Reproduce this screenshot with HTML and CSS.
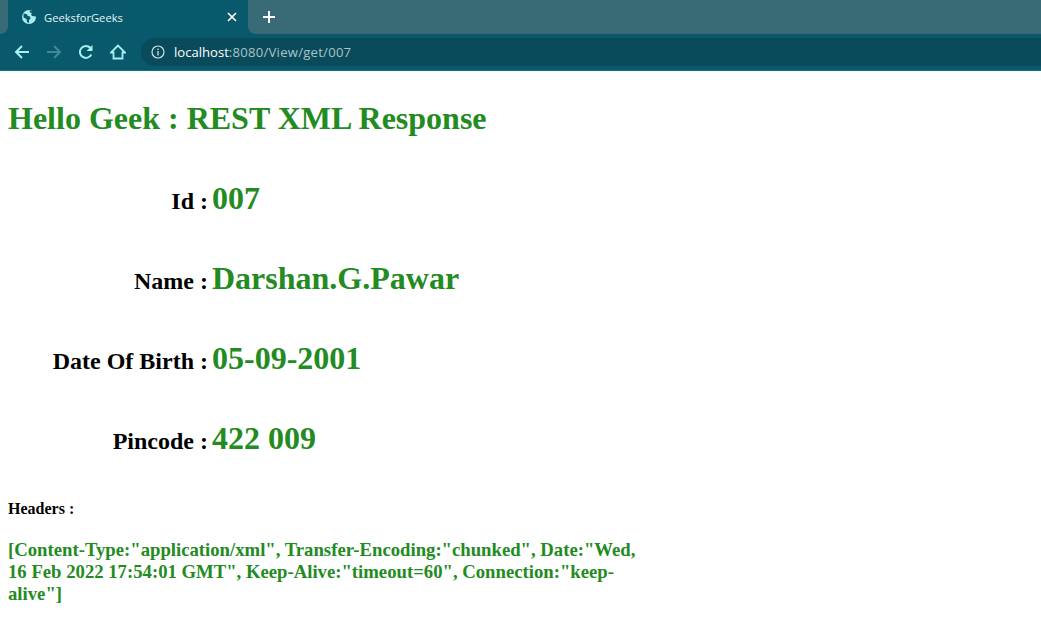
FILE: index.html
```html
<!DOCTYPE html>
<html lang="en">
<head>
<meta charset="utf-8">
<title>GeeksforGeeks</title>
<link rel="stylesheet" href="styles.css">
</head>
<body>
<header class="browser">
  <div class="tabstrip">
    <div class="strip-left"></div>
    <div class="tab">
      <svg class="favicon" viewBox="0 0 16 16" width="16" height="16"><circle cx="8" cy="8" r="7" fill="#a8eef2"/><path d="M2.500 4.500l3 .500 1.500 2 2 .500.500 2-1.500 1.500v3l-2-1-.500-3-3-1.500zM8.500 1.500l.500 2 2 .500-1 1.500 1 1.500 4 .500.500-2-2.500-3.500z" fill="#07596b"/></svg>
      <span class="tab-title">GeeksforGeeks</span>
      <svg class="tab-close" viewBox="0 0 10 10" width="10" height="10"><path d="M1 1l8 8M9 1l-8 8" stroke="#fff" stroke-width="1.700"/></svg>
    </div>
    <div class="strip-right">
      <svg class="new-tab" viewBox="0 0 12 12" width="12" height="12"><path d="M6 0v12M0 6h12" stroke="#fff" stroke-width="2"/></svg>
    </div>
  </div>
  <div class="toolbar">
    <svg class="nav-icon" viewBox="0 0 16 16" width="16" height="16"><path d="M15 8H2M8 2L2 8l6 6" fill="none" stroke="#a8eef2" stroke-width="2"/></svg>
    <svg class="nav-icon" viewBox="0 0 16 16" width="16" height="16"><path d="M1 8h13M8 2l6 6-6 6" fill="none" stroke="#41899a" stroke-width="2"/></svg>
    <svg class="nav-icon" viewBox="0 0 16 16" width="16" height="16"><path d="M13.300 10.500A6 6 0 1 1 12.300 3.800" fill="none" stroke="#a8eef2" stroke-width="2"/><path d="M14.500 1v6h-6z" fill="#a8eef2"/></svg>
    <svg class="nav-icon" viewBox="0 0 16 16" width="16" height="16"><path d="M8 1.500L1 8.500h2.500v6h9v-6H15z" fill="none" stroke="#a8eef2" stroke-width="1.800"/></svg>
    <div class="omnibox">
      <svg class="info" viewBox="0 0 14 14" width="14" height="14"><circle cx="7" cy="7" r="6" fill="none" stroke="#cfe0e4" stroke-width="1.200"/><path d="M7 6v4.500M7 3.500v1.500" stroke="#cfe0e4" stroke-width="1.300"/></svg>
      <span class="url"><span class="host">localhost</span>:8080/View/get/007</span>
    </div>
  </div>
</header>
<main class="page">
  <h1 class="title">Hello Geek : REST XML Response</h1>
  <table class="details">
    <tr><th class="label">Id :</th><td class="value">007</td></tr>
    <tr><th class="label">Name :</th><td class="value">Darshan.G.Pawar</td></tr>
    <tr><th class="label">Date Of Birth :</th><td class="value">05-09-2001</td></tr>
    <tr><th class="label">Pincode :</th><td class="value">422 009</td></tr>
  </table>
  <h4 class="headers-label">Headers :</h4>
  <h3 class="headers-value">[Content-Type:"application/xml", Transfer-Encoding:"chunked", Date:"Wed, 16 Feb 2022 17:54:01 GMT", Keep-Alive:"timeout=60", Connection:"keep-alive"]</h3>
</main>
</body>
</html>
```
FILE: styles.css
```css
html, body { margin: 0; padding: 0; background: #fff; overflow: hidden; }
body { width: 1041px; height: 644px; font-family: "Liberation Serif", "Times New Roman", serif; }

.browser { height: 71px; display: flex; flex-direction: column; font-family: "Open Sans", "Noto Sans", sans-serif; }
.tabstrip { height: 34px; background: #07596b; display: flex; }
.strip-left { width: 8px; background: #396b76; border-radius: 0 0 8px 0; }
.strip-right { flex: 1; background: #396b76; border-radius: 0 0 0 8px; display: flex; align-items: center; padding-left: 15px; }
.tab { width: 240px; height: 34px; box-sizing: border-box; background: #07596b; border-radius: 8px 8px 0 0; display: flex; align-items: center; padding: 0 11px 0 13px; }
.favicon { flex: none; }
.tab-title { flex: 1; margin-left: 7px; font-size: 11.200px; color: #e4f3f5; }
.toolbar { height: 37px; background: #07596b; border-bottom: 1px solid #0f7383; box-sizing: border-box; display: flex; align-items: center; padding: 0 0 0 14px; gap: 16px; }
.nav-icon { flex: none; }
.omnibox { flex: 1; height: 28px; margin-left: -1px; background: #094b5a; border-radius: 14px 0 0 14px; display: flex; align-items: center; padding-left: 10px; gap: 9px; }
.url { font-size: 13.100px; color: #a9c3c9; font-family: "Open Sans", sans-serif; letter-spacing: 0.250px; }
.host { color: #fff; letter-spacing: 0; }

.page { padding: 0 8px; }
.title { margin: 0; padding-top: 29px; font-size: 32px; line-height: 37px; color: #228b22; }
.details { border-collapse: separate; border-spacing: 2px; margin-top: 21px; }
.label { width: 199px; height: 78px; padding: 5px 1px 1px; box-sizing: border-box; text-align: right; vertical-align: middle; font-size: 24px; color: #000; }
.value { padding: 1px 1px 3px; vertical-align: middle; font-size: 32px; font-weight: bold; color: #228b22; }
.headers-label { margin: 20px 0 0; font-size: 16px; line-height: 18px; color: #000; }
.headers-value { margin: 21px 0 0; width: 640px; font-size: 18.720px; line-height: 22px; color: #228b22; }
```
